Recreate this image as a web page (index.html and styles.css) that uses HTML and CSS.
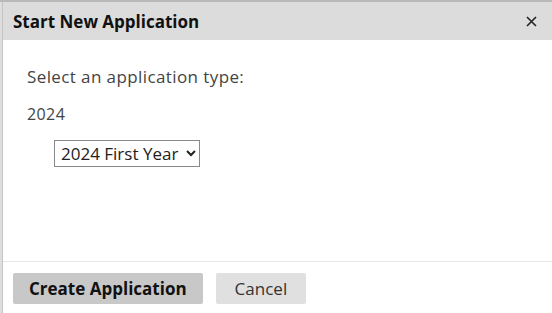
FILE: index.html
```html
<!DOCTYPE html>
<html lang="en">
<head>
    <meta charset="UTF-8">
    <title>Start New Application</title>
    <link rel="stylesheet" href="styles.css">
</head>
<body>
    <div class="page-edge"></div>
    <div class="modal">
        <div class="modal-header">
            <span class="modal-title">Start New Application</span>
            <button class="close-btn" aria-label="Close">
                <svg width="11" height="11" viewBox="0 0 11 11"><path d="M1 1L10 10M10 1L1 10" stroke="#222" stroke-width="1.6"/></svg>
            </button>
        </div>
        <div class="modal-body">
            <p class="prompt">Select an application type:</p>
            <p class="year">2024</p>
            <div class="select-wrap">
                <select class="type-select">
                    <option>2024 First Year</option>
                </select>
            </div>
        </div>
        <div class="modal-footer">
            <button class="btn btn-primary">Create Application</button>
            <button class="btn btn-cancel">Cancel</button>
        </div>
    </div>
</body>
</html>
```

FILE: styles.css
```css
body {
    margin: 0;
    padding: 0;
    display: flex;
    height: 313px;
    overflow: hidden;
    background-color: #b8b8b8;
    font-family: 'Open Sans', 'Liberation Sans', sans-serif;
    color: #333;
}

.page-edge {
    width: 3px;
    margin-top: 2px;
    background-color: #dedede;
    border-right: 1px solid #c4c4c4;
    box-sizing: border-box;
}

.modal {
    flex: 1;
    margin-top: 2px;
    background-color: #fff;
    display: flex;
    flex-direction: column;
}

.modal-header {
    height: 38px;
    background-color: #dcdcdc;
    display: flex;
    align-items: center;
    justify-content: space-between;
    padding: 0 14px 0 10px;
}

.modal-title {
    font-size: 17px;
    font-weight: 700;
    color: #111;
}

.close-btn {
    background: none;
    border: none;
    padding: 0;
    width: 14px;
    height: 14px;
    display: flex;
    align-items: center;
    justify-content: center;
}

.modal-body {
    flex: 1;
    padding: 25px 24px 0 24px;
    border-bottom: 1px solid #e6e6e6;
}

.prompt {
    margin: 0 0 15px 0;
    font-size: 17px;
    letter-spacing: 0.4px;
    color: #444;
}

.year {
    margin: 0 0 15px 0;
    font-size: 16px;
    letter-spacing: 0.4px;
    color: #444;
}

.select-wrap {
    padding-left: 27px;
}

.type-select {
    font-family: inherit;
    font-size: 17px;
    color: #222;
    height: 27px;
    padding: 0 4px 0 2px;
    border: 1px solid #8a8a8a;
    border-radius: 0;
    background-color: #fff;
}

.modal-footer {
    display: flex;
    gap: 13px;
    padding: 11px 10px 9px 10px;
}

.btn {
    font-family: inherit;
    font-size: 17px;
    height: 31px;
    border: none;
    border-radius: 2px;
    color: #111;
    padding: 0 16px;
}

.btn-primary {
    background-color: #c8c8c8;
    font-weight: 700;
}

.btn-cancel {
    background-color: #e0e0e0;
    color: #333;
    padding: 0 19px;
}
```
